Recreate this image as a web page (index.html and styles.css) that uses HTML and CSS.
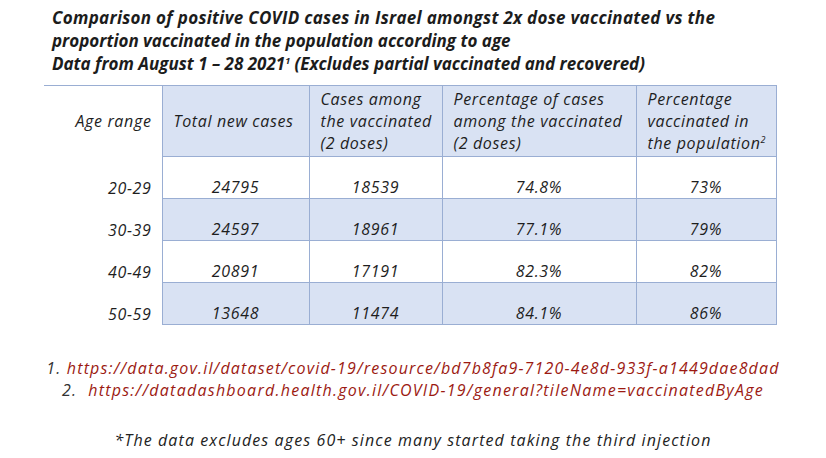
FILE: index.html
```html
<!DOCTYPE html>
<html>
<head>
<meta charset="utf-8">
<link rel="stylesheet" href="styles.css">
</head>
<body>
<div class="page">
  <div class="title">
    <div class="l1">Comparison of positive COVID cases in Israel amongst 2x dose vaccinated vs the</div>
    <div>proportion vaccinated in the population according to age</div>
    <div>Data from August 1 – 28 2021<sup>1</sup> (Excludes partial vaccinated and recovered)</div>
  </div>
  <table class="data">
    <colgroup>
      <col class="c1"><col class="c2"><col class="c3"><col class="c4"><col class="c5">
    </colgroup>
    <thead>
      <tr>
        <th class="age">Age range</th>
        <th>Total new cases</th>
        <th>Cases among<br>the vaccinated<br>(2 doses)</th>
        <th>Percentage of cases<br>among the vaccinated<br>(2 doses)</th>
        <th>Percentage<br>vaccinated in<br>the population<sup>2</sup></th>
      </tr>
    </thead>
    <tbody>
      <tr><td class="age">20-29</td><td>24795</td><td>18539</td><td>74.8%</td><td>73%</td></tr>
      <tr class="alt"><td class="age">30-39</td><td>24597</td><td>18961</td><td>77.1%</td><td>79%</td></tr>
      <tr><td class="age">40-49</td><td>20891</td><td>17191</td><td>82.3%</td><td>82%</td></tr>
      <tr class="alt"><td class="age">50-59</td><td>13648</td><td>11474</td><td>84.1%</td><td>86%</td></tr>
    </tbody>
  </table>
  <div class="notes">
    <div class="note"><span class="num">1.</span> <span class="link">https://data.gov.il/dataset/covid-19/resource/bd7b8fa9-7120-4e8d-933f-a1449dae8dad</span></div>
    <div class="note n2"><span class="num">2.</span>&nbsp; <span class="link">https://datadashboard.health.gov.il/COVID-19/general?tileName=vaccinatedByAge</span></div>
  </div>
  <div class="foot">*The data excludes ages 60+ since many started taking the third injection</div>
</div>
</body>
</html>
```
FILE: styles.css
```css
html, body {
  margin: 0;
  padding: 0;
  background: #ffffff;
}
.page {
  width: 826px;
  height: 458px;
  overflow: hidden;
}
.title {
  padding: 6px 0 0 52px;
  font-family: "Open Sans", "Liberation Sans", sans-serif;
  font-style: italic;
  font-weight: 700;
  font-size: 17px;
  letter-spacing: 0;
  line-height: 23px;
  color: #1c1c1c;
  height: 79px;
  box-sizing: border-box;
}
.title .l1 { letter-spacing: 0.3px; }
.title sup {
  font-size: 9px;
  line-height: 0;
  vertical-align: 6px;
}
.data {
  margin: 6px 0 0 44px;
  border-collapse: collapse;
  table-layout: fixed;
  width: 732px;
  font-family: "Open Sans", "Liberation Sans", sans-serif;
  font-style: italic;
  font-size: 16px;
  letter-spacing: 0.65px;
  color: #1e1e1e;
  border-top: 1px solid #9aaed3;
}
.c1 { width: 118px; }
.c2 { width: 147px; }
.c3 { width: 133px; }
.c4 { width: 194px; }
.c5 { width: 140px; }
.data th {
  font-weight: 400;
  text-align: left;
  padding: 2px 0 2px 11px;
  line-height: 22px;
  height: 66px;
  background: #d9e2f3;
  border: 1px solid #9aaed3;
  vertical-align: middle;
  white-space: nowrap;
}
.data th sup {
  font-size: 9px;
  line-height: 0;
  vertical-align: 6px;
}
.data td {
  text-align: center;
  line-height: 22px;
  height: 41px;
  padding: 0;
  vertical-align: bottom;
  border: 1px solid #9aaed3;
  background: #ffffff;
}
.data tr.alt td { background: #d9e2f3; }
.data .age,
.data tr.alt td.age {
  background: #ffffff;
  text-align: right;
  padding: 0 10px 0 0;
  border: none;
  border-right: 1px solid #9aaed3;
}
.data th.age { border-top: 1px solid #9aaed3; }
.notes {
  margin-top: 32px;
  text-align: center;
  font-family: "Open Sans", sans-serif;
  font-style: italic;
  font-size: 16px;
  letter-spacing: 1.17px;
  line-height: 22px;
}
.notes .n2 { letter-spacing: 1.25px; }
.num { color: #333333; }
.link { color: #9c1a12; }
.foot {
  margin-top: 28px;
  text-align: center;
  font-family: "Open Sans", sans-serif;
  font-style: italic;
  font-size: 16px;
  letter-spacing: 1.1px;
  line-height: 22px;
  color: #222222;
}
```
